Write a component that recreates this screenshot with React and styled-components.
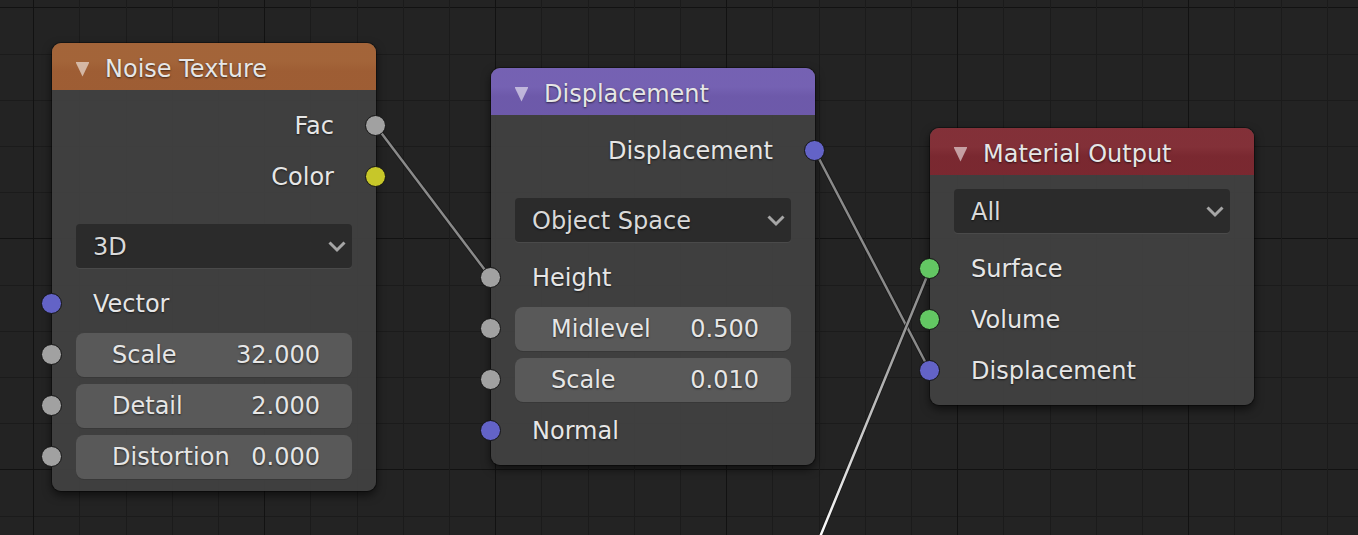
import React from "react";
import styled, { createGlobalStyle } from "styled-components";

const GlobalStyle = createGlobalStyle`
  *, *::before, *::after { box-sizing: border-box; }
  body { margin: 0; background: #232323; }
  body, button, input, select {
    font-family: "DejaVu Sans", sans-serif;
    font-size: 24px;
    line-height: 28px;
    color: #e6e6e6;
    text-shadow: 0 1px 2px rgba(0, 0, 0, 0.6);
  }
`;

const minor = "#1b1b1b";
const major = "#121212";

const gridLines = (direction, first) => `
  linear-gradient(${direction},
    ${major} 0 1px, transparent 1px ${first}px,
    ${minor} ${first}px ${first + 1}px, transparent ${first + 1}px 93px,
    ${minor} 93px 94px, transparent 94px 139px,
    ${minor} 139px 140px, transparent 140px 185px,
    ${minor} 185px 186px, transparent 186px)
`;

const Canvas = styled.main`
  position: relative;
  width: 100%;
  height: 100vh;
  overflow: hidden;
  background-color: #232323;
  background-image: ${gridLines("to right", 46)}, ${gridLines("to bottom", 47)};
  background-size: 231px 231px;
  background-position: 33px 7px;
`;

const Links = styled.svg`
  position: absolute;
  inset: 0;
  width: 100%;
  height: 100%;
`;

const Node = styled.section`
  position: absolute;
  left: ${(p) => p.$x}px;
  top: ${(p) => p.$y}px;
  width: 324px;
  padding-bottom: 9px;
  border-radius: 9px;
  background: rgba(65, 65, 65, 0.94);
  box-shadow: 0 0 0 1px rgba(0, 0, 0, 0.35), 0 4px 10px rgba(0, 0, 0, 0.6);
`;

const headerTones = {
  texture: ["165, 101, 57", "160, 94, 52"],
  vector: ["118, 98, 181", "110, 90, 172"],
  output: ["132, 48, 56", "123, 40, 48"],
};

const Header = styled.header`
  display: flex;
  align-items: center;
  gap: 16px;
  height: 47px;
  padding: 5px 24px 0;
  border-radius: 9px 9px 0 0;
  background: linear-gradient(
    rgba(${(p) => headerTones[p.$tone][0]}, 0.98) 40%,
    rgba(${(p) => headerTones[p.$tone][1]}, 0.98) 60%
  );
`;

const Title = styled.h2`
  margin: 0;
  font-size: 24px;
  font-weight: 400;
  white-space: nowrap;
`;

const Collapse = styled.button`
  display: flex;
  width: 13px;
  padding: 0;
  border: 0;
  background: none;
`;

const Body = styled.div`
  padding: 10px 24px 0;
`;

const Outputs = styled.div`
  padding-bottom: 18px;
`;

const Row = styled.div`
  position: relative;
  display: flex;
  align-items: center;
  justify-content: ${(p) => (p.$output ? "flex-end" : "flex-start")};
  height: 51px;
  padding: 1px 18px 0 17px;
`;

const FieldRow = styled.div`
  position: relative;
  height: 51px;
  padding: 4px 0 3px;
`;

const Socket = styled.span`
  position: absolute;
  top: 15px;
  ${(p) => (p.$output ? "right: -34px" : "left: -35px")};
  width: 21px;
  height: 21px;
  border: 1px solid #141414;
  border-radius: 50%;
  background: ${(p) => p.$color};
`;

const Field = styled.label`
  display: flex;
  align-items: center;
  justify-content: space-between;
  height: 44px;
  padding: 0 32px 0 36px;
  border-radius: 8px;
  background: #595959;
  box-shadow: 0 1px 0 #383838;
`;

const NumberInput = styled.input`
  width: 90px;
  padding: 0;
  border: 0;
  outline: 0;
  background: none;
  text-align: right;
`;

const Picker = styled.div`
  position: relative;
  padding: 4px 0 10px;
`;

const Select = styled.select`
  display: block;
  appearance: none;
  width: 100%;
  height: 44px;
  padding: 2px 40px 0 17px;
  border: 0;
  border-radius: 4px;
  outline: 0;
  background: #2b2b2b;
  color: #d9d9d9;
  box-shadow: 0 1px 0 #4a4a4a;
`;

const Chevron = styled.svg`
  position: absolute;
  top: 20px;
  right: 5px;
  width: 20px;
  height: 13px;
  pointer-events: none;
`;

const colors = {
  value: "#a1a1a1",
  color: "#c7c729",
  vector: "#6363c7",
  shader: "#63c763",
};

function NodeHeader({ tone, children }) {
  return (
    <Header $tone={tone}>
      <Collapse type="button" aria-label={`Collapse ${children}`}>
        <svg width="13" height="15" viewBox="0 0 13 15">
          <path d="M-0.5 0H13.5L6.5 14.5Z" fill="#fff" fillOpacity="0.55" />
        </svg>
      </Collapse>
      <Title>{children}</Title>
    </Header>
  );
}

function SocketRow({ type, output, children }) {
  return (
    <Row $output={output}>
      <Socket $output={output} $color={colors[type]} />
      {children}
    </Row>
  );
}

function ValueRow({ name, value }) {
  return (
    <FieldRow>
      <Socket $color={colors.value} />
      <Field>
        {name}
        <NumberInput type="text" inputMode="decimal" defaultValue={value} />
      </Field>
    </FieldRow>
  );
}

function Dropdown({ label, value }) {
  return (
    <Picker>
      <Select aria-label={label} defaultValue={value}>
        <option>{value}</option>
      </Select>
      <Chevron viewBox="0 0 20 13">
        <path d="M2.5 2.5L10 10L17.5 2.5" fill="none" stroke="#a6a6a6" strokeWidth="3" />
      </Chevron>
    </Picker>
  );
}

function Link({ from, to, stroke = "#8a8a8a" }) {
  const line = { x1: from[0], y1: from[1], x2: to[0], y2: to[1] };
  return (
    <>
      <line {...line} stroke="#161616" strokeWidth="4" />
      <line {...line} stroke={stroke} strokeWidth="2.5" />
    </>
  );
}

export default function App() {
  return (
    <>
      <GlobalStyle />
      <Canvas>
        <Links aria-hidden="true">
          <defs>
            <linearGradient id="fade" gradientUnits="userSpaceOnUse" x1="930" y1="269" x2="820" y2="535">
              <stop offset="0" stopColor="#8a8a8a" />
              <stop offset="0.25" stopColor="#999" />
              <stop offset="0.85" stopColor="#e8e8e8" />
              <stop offset="1" stopColor="#fff" />
            </linearGradient>
          </defs>
          <Link from={[376, 126]} to={[491, 278]} />
          <Link from={[815, 151]} to={[930, 371]} />
          <Link from={[930, 269]} to={[813, 554]} stroke="url(#fade)" />
        </Links>

        <Node $x={52} $y={43}>
          <NodeHeader tone="texture">Noise Texture</NodeHeader>
          <Body>
            <Outputs>
              <SocketRow output type="value">Fac</SocketRow>
              <SocketRow output type="color">Color</SocketRow>
            </Outputs>
            <Dropdown label="Dimensions" value="3D" />
            <SocketRow type="vector">Vector</SocketRow>
            <ValueRow name="Scale" value="32.000" />
            <ValueRow name="Detail" value="2.000" />
            <ValueRow name="Distortion" value="0.000" />
          </Body>
        </Node>

        <Node $x={491} $y={68}>
          <NodeHeader tone="vector">Displacement</NodeHeader>
          <Body>
            <Outputs>
              <SocketRow output type="vector">Displacement</SocketRow>
            </Outputs>
            <Dropdown label="Space" value="Object Space" />
            <SocketRow type="value">Height</SocketRow>
            <ValueRow name="Midlevel" value="0.500" />
            <ValueRow name="Scale" value="0.010" />
            <SocketRow type="vector">Normal</SocketRow>
          </Body>
        </Node>

        <Node $x={930} $y={128}>
          <NodeHeader tone="output">Material Output</NodeHeader>
          <Body>
            <Dropdown label="Target" value="All" />
            <SocketRow type="shader">Surface</SocketRow>
            <SocketRow type="shader">Volume</SocketRow>
            <SocketRow type="vector">Displacement</SocketRow>
          </Body>
        </Node>
      </Canvas>
    </>
  );
}
